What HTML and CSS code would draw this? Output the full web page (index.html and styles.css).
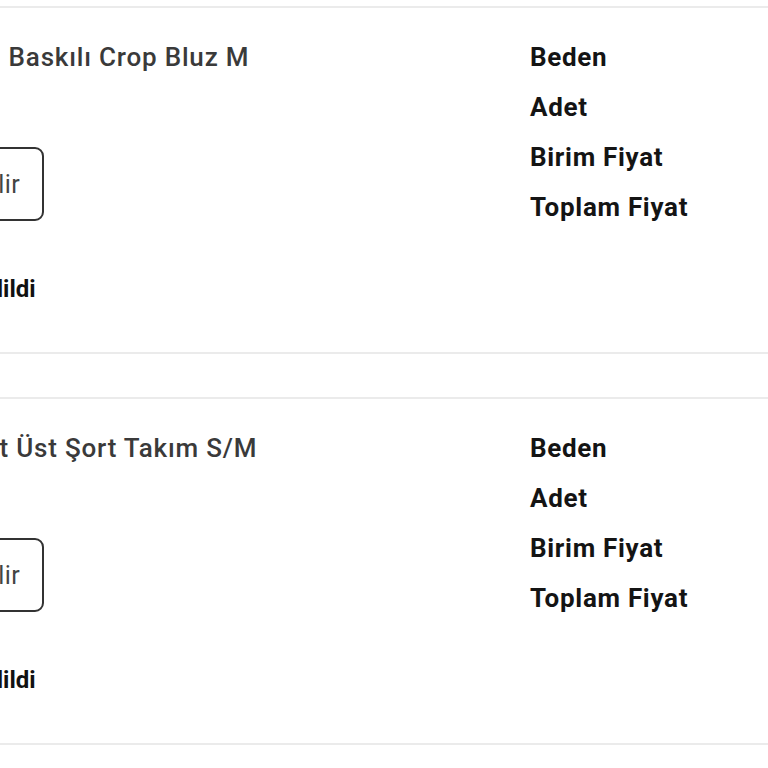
FILE: index.html
```html
<!DOCTYPE html>
<html lang="tr">
<head>
<meta charset="utf-8">
<title>Siparişler</title>
<link rel="stylesheet" href="styles.css">
</head>
<body>
<div class="list">
  <div class="card">
    <div class="left">
      <div class="title">Kadın Baskılı Crop Bluz M</div>
      <button class="btn"><span>İade Edilir</span></button>
      <div class="status">İade Edildi</div>
    </div>
    <div class="right">
      <div class="label">Beden</div>
      <div class="label">Adet</div>
      <div class="label">Birim Fiyat</div>
      <div class="label">Toplam Fiyat</div>
    </div>
  </div>
  <div class="card">
    <div class="left">
      <div class="title">İki Set Üst Şort Takım S/M</div>
      <button class="btn"><span>İade Edilir</span></button>
      <div class="status">İade Edildi</div>
    </div>
    <div class="right">
      <div class="label">Beden</div>
      <div class="label">Adet</div>
      <div class="label">Birim Fiyat</div>
      <div class="label">Toplam Fiyat</div>
    </div>
  </div>
</div>
</body>
</html>
```

FILE: styles.css
```css
html, body {
  margin: 0;
  padding: 0;
  background: #ffffff;
  overflow: hidden;
}
body {
  font-family: Roboto, "Noto Sans", sans-serif;
  width: 768px;
  height: 768px;
}
.list {
  padding-top: 6px;
  display: flex;
  flex-direction: column;
  gap: 43px;
  margin-left: -69px;
  width: 900px;
}
.card {
  display: flex;
  border-top: 2px solid #ebebeb;
  border-bottom: 2px solid #ebebeb;
  padding: 24px 0 38px 0;
}
.left {
  width: 599px;
  display: flex;
  flex-direction: column;
  align-items: flex-start;
}
.title {
  font-size: 26px;
  font-weight: 500;
  color: #3a3a3a;
  line-height: 50px;
  letter-spacing: 0.8px;
  white-space: nowrap;
}
.btn {
  margin-top: 65px;
  height: 74px;
  width: 113px;
  box-sizing: border-box;
  border: 2px solid #333333;
  border-radius: 9px;
  background: #ffffff;
  font-family: Roboto, "Noto Sans", sans-serif;
  font-size: 25px;
  letter-spacing: 0.4px;
  color: #444444;
  padding: 0 22px 0 0;
  display: flex;
  align-items: center;
  justify-content: flex-end;
  white-space: nowrap;
  overflow: hidden;
}
.btn span {
  flex-shrink: 0;
}
.status {
  margin-top: 43px;
  margin-left: -7px;
  font-size: 24px;
  font-weight: 700;
  color: #111111;
  line-height: 50px;
  white-space: nowrap;
}
.right {
  display: flex;
  flex-direction: column;
}
.label {
  font-size: 26px;
  font-weight: 700;
  color: #141414;
  line-height: 50px;
  letter-spacing: 0.7px;
  white-space: nowrap;
}
```
